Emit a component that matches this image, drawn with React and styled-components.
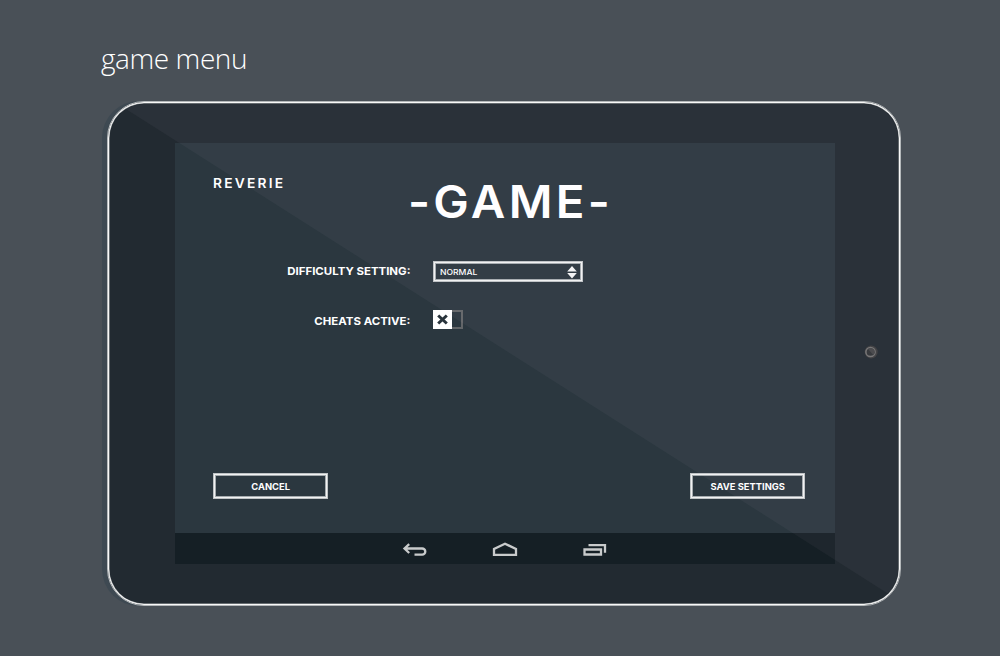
import React from 'react';
import styled, { createGlobalStyle } from 'styled-components';

const GlobalStyle = createGlobalStyle`
  * { box-sizing: border-box; }
  html, body { margin: 0; background: #495057; }
  body { font-family: Inter, "Liberation Sans", sans-serif; color: #fff; overflow: hidden; }
  button { font: inherit; color: inherit; border-radius: 0; background: none; padding: 0; }
`;

const Page = styled.main`
  width: 1000px;
  height: 656px;
  padding: 38px 98px 50px 107px;
  display: flex;
  flex-direction: column;
  background: #495057;
`;

const Caption = styled.h1`
  margin: 0 0 0 -6px;
  height: 63px;
  font: 300 28px/40px "Open Sans", sans-serif;
  letter-spacing: -0.43px;
`;

const Tablet = styled.section`
  position: relative;
  width: 794px;
  height: 505px;
  border: 1px solid #b4b8ba;
  border-radius: 37px;
  background: #222a31;
  box-shadow: -5px 0 0 #3e4952, inset 0 0 0 1px #f8f8f8, inset 0 0 0 1.5px #a9adaf;
  padding: 41px 0 0 67px;
  display: flex;
`;

const Glare = styled.div`
  position: absolute;
  inset: 2px;
  border-radius: 34px;
  background: rgba(255, 235, 245, 0.038);
  clip-path: polygon(8px 0, 100% 0, 100% 496px);
  pointer-events: none;
`;

const Screen = styled.div`
  width: 660px;
  height: 421px;
  display: flex;
  flex-direction: column;
  background: #2b373f;
`;

const Content = styled.div`
  height: 390px;
  padding: 30px 30px 34px 38px;
  display: flex;
  flex-direction: column;
`;

const Header = styled.header`
  display: flex;
  height: 88px;
`;

const Label = styled.span`
  display: inline-block;
  white-space: nowrap;
  font-size: ${(p) => p.$size}px;
  font-weight: ${(p) => p.$weight || 700};
  line-height: 20px;
  letter-spacing: ${(p) => p.$spacing || 0}px;
  transform: scaleX(${(p) => p.$stretch || 1.04});
  transform-origin: ${(p) => p.$origin || 'center'};
`;

const Brand = styled(Label)`
  width: 195px;
`;

const Title = styled.h2`
  margin: 0;
  font-size: 45px;
  font-weight: 580;
  line-height: 58px;
  letter-spacing: 3.1px;
  white-space: nowrap;
  transform: scaleX(1.055);
  transform-origin: left;
`;

const Form = styled.div`
  display: grid;
  grid-template-columns: 198px 150px;
  column-gap: 22px;
  grid-auto-rows: 21px;
  row-gap: 28px;
  height: 212px;
  align-content: start;
`;

const FieldName = styled(Label)`
  justify-self: end;
  margin-right: 0.5px;
  line-height: ${(p) => p.$leading || 20}px;
`;

const framed = `
  border: 1px solid #bfc3c5;
  box-shadow: inset 0 0 0 1px #f1f2f2, inset 0 0 0 2px #a5abae;
`;

const Select = styled.button`
  ${framed}
  width: 150px;
  height: 21px;
  padding: 1px 5px 0 6px;
  display: flex;
  align-items: center;
  justify-content: space-between;
`;

const Toggle = styled.button`
  width: 30px;
  height: 19px;
  border: 2px solid #626568;
  border-width: 2px 2.5px 2px 0;
  display: flex;
`;

const Knob = styled.span`
  width: 19px;
  height: 19px;
  margin-top: -2px;
  background: #fff;
  display: grid;
  place-items: center;
`;

const Actions = styled.footer`
  display: flex;
  justify-content: space-between;
`;

const Action = styled.button`
  ${framed}
  width: 115px;
  height: 26px;
  padding-top: 1px;
  display: flex;
  align-items: center;
  justify-content: center;
`;

const NavBar = styled.nav`
  flex: 1;
  display: flex;
  align-items: center;
  justify-content: center;
  gap: 62px;
  padding: 2px 1px 0 0;
  background: #151f25;
`;

const Camera = styled.div`
  margin: 200px 0 0 29px;
  width: 14px;
  height: 14px;
`;

const NavIcon = ({ children }) => (
  <svg width="28" height="18" viewBox="0 0 28 18" fill="none" stroke="#c9cbcc" strokeWidth="2.3">
    {children}
  </svg>
);

export default function App() {
  return (
    <Page>
      <GlobalStyle />
      <Caption>game menu</Caption>
      <Tablet>
        <Screen>
          <Content>
            <Header>
              <Brand $size={13} $weight={600} $spacing={2.1} $stretch={1.06} $origin="left">REVERIE</Brand>
              <Title>-GAME-</Title>
            </Header>
            <Form>
              <FieldName $size={11} $origin="right">DIFFICULTY SETTING:</FieldName>
              <Select>
                <Label $size={8} $weight={550} $stretch={1.07} $origin="left">NORMAL</Label>
                <svg width="10" height="13" viewBox="0 0 10 13" fill="#f4f5f5">
                  <path d="M5 0 9.800 5.500H.2zM.2 7h9.600L5 12.500z" />
                </svg>
              </Select>
              <FieldName $size={11} $origin="right" $leading={22}>CHEATS ACTIVE:</FieldName>
              <Toggle>
                <Knob>
                  <svg width="11" height="11" viewBox="0 0 11 11" stroke="#29343c" strokeWidth="3">
                    <path d="m1.200 1.500 8.600 8M9.800 1.500l-8.600 8" />
                  </svg>
                </Knob>
              </Toggle>
            </Form>
            <Actions>
              <Action><Label $size={9}>CANCEL</Label></Action>
              <Action><Label $size={9}>SAVE SETTINGS</Label></Action>
            </Actions>
          </Content>
          <NavBar>
            <NavIcon>
              <path d="M8.200 3.200 3.500 7.500 8.200 12M4 7.500h17.200a3 3 0 0 1 0 6.200H13.500" />
            </NavIcon>
            <NavIcon>
              <path d="M3 13.800V8L14 2.700l11 5.300v5.800z" />
            </NavIcon>
            <NavIcon>
              <path d="M3.500 8.500h16.500v5h-16.500zM7.500 4.200h16.500v7.500" />
            </NavIcon>
          </NavBar>
        </Screen>
        <Camera>
          <svg width="14" height="14" viewBox="0 0 14 14">
            <circle cx="7.200" cy="7" r="6.500" fill="#3c3d3f" />
            <circle cx="6.500" cy="7" r="4.600" fill="#303437" stroke="#737373" strokeWidth="1.500" />
            <path d="m4 4 5.500 6.200A4 4 0 0 0 4 4" fill="#454648" />
          </svg>
        </Camera>
        <Glare />
      </Tablet>
    </Page>
  );
}
